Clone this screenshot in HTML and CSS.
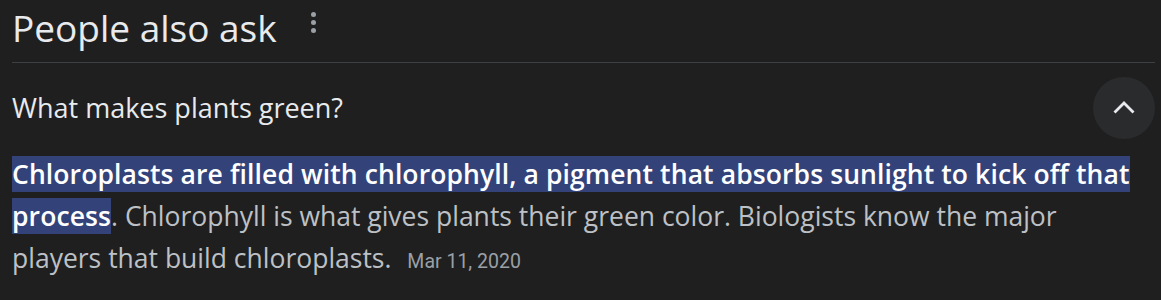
FILE: index.html
```html
<!DOCTYPE html>
<html lang="en">
<head>
    <meta charset="UTF-8">
    <meta name="viewport" content="width=device-width, initial-scale=1.0">
    <title>People also ask</title>
    <link rel="stylesheet" href="styles.css">
</head>
<body>
    <div class="paa">
        <div class="paa-header">
            <h2 class="paa-title">People also ask</h2>
            <span class="more-dots" aria-label="More options">
                <span></span><span></span><span></span>
            </span>
        </div>

        <div class="question-row">
            <div class="question">What makes plants green?</div>
            <button class="toggle-button" aria-label="Collapse">
                <svg width="32" height="32" viewBox="0 0 32 32">
                    <path d="M6.5 20.5 16 11l9.5 9.5" fill="none" stroke="#e8eaed" stroke-width="2.8"/>
                </svg>
            </button>
        </div>

        <p class="answer">
            <mark class="answer-highlight">Chloroplasts are filled with chlorophyll, a pigment that absorbs sunlight to kick off that process</mark>. Chlorophyll is what gives plants their green color. Biologists know the major players that build chloroplasts. <span class="answer-date">Mar 11, 2020</span>
        </p>
    </div>
</body>
</html>
```

FILE: styles.css
```css
body {
    margin: 0;
    background-color: #1f1f1f;
    font-family: "Open Sans", Arial, sans-serif;
    color: #e8eaed;
}
.paa {
    padding: 0 6px 0 12px;
}
.paa-header {
    display: flex;
    align-items: center;
    height: 62px;
    border-bottom: 1px solid #3c4043;
}
.paa-title {
    margin: 0;
    font-size: 37px;
    font-weight: 400;
    line-height: 44px;
    margin-top: -6px;
}
.more-dots {
    display: flex;
    flex-direction: column;
    gap: 3px;
    align-self: flex-start;
    margin: 12px 0 0 34px;
}
.more-dots span {
    width: 5px;
    height: 5px;
    border-radius: 50%;
    background-color: #9aa0a6;
}
.question-row {
    display: flex;
    align-items: center;
    justify-content: space-between;
    height: 90px;
}
.question {
    font-size: 27px;
    margin-top: -2px;
}
.toggle-button {
    width: 62px;
    height: 62px;
    border: none;
    border-radius: 50%;
    background-color: #2a2b2d;
    display: flex;
    align-items: center;
    justify-content: center;
    padding: 0;
    cursor: pointer;
}
.answer {
    margin: 0;
    font-size: 26.5px;
    line-height: 42px;
    color: #bdc1c6;
    padding-right: 20px;
}
.answer-highlight {
    background-color: #33437a;
    color: #ffffff;
    font-weight: 600;
    letter-spacing: 0.1px;
}
.answer-date {
    font-family: Roboto, Arial, sans-serif;
    font-size: 19.5px;
    color: #9aa0a6;
    margin-left: 9px;
}
```
